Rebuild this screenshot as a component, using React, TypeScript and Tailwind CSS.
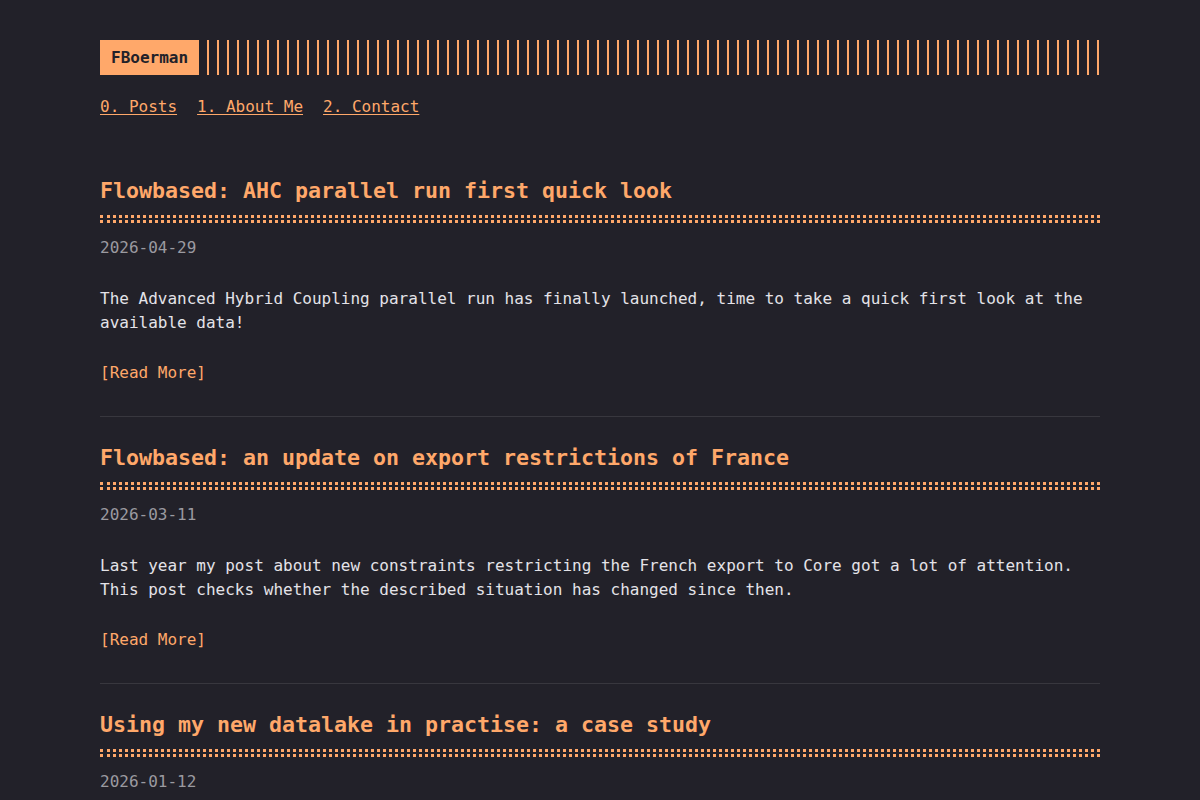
import React from 'react'

const posts = [
    {
        title: 'Flowbased: AHC parallel run first quick look',
        date: '2026-04-29',
        summary:
            'The Advanced Hybrid Coupling parallel run has finally launched, time to take a quick first look at the available data!',
    },
    {
        title: 'Flowbased: an update on export restrictions of France',
        date: '2026-03-11',
        summary:
            'Last year my post about new constraints restricting the French export to Core got a lot of attention. This post checks whether the described situation has changed since then.',
    },
    {
        title: 'Using my new datalake in practise: a case study',
        date: '2026-01-12',
        summary:
            'A look at how the datalake I built last year holds up when answering a real question about the market.',
    },
]

const mono = { fontFamily: '"DejaVu Sans Mono", "Liberation Mono", monospace' }

function Header() {
    return (
        <header>
            <div className="flex items-stretch">
                <a className="bg-[#ffa86a] text-[#222129] font-bold text-[16px] pl-[11px] pr-[11px] py-[5px] leading-[25px] no-underline">
                    FBoerman
                </a>
                {/* bar pattern */}
                <div className="flex-1 ml-[8px] bg-[repeating-linear-gradient(90deg,#ffa86a_0px,#ffa86a_2px,transparent_2px,transparent_10px)]" />
            </div>
            <nav className="mt-[20px] flex gap-[20px] text-[16px] leading-[24px]">
                <a className="text-[#ffa86a] underline underline-offset-2">0. Posts</a>
                <a className="text-[#ffa86a] underline underline-offset-2">1. About Me</a>
                <a className="text-[#ffa86a] underline underline-offset-2">2. Contact</a>
            </nav>
        </header>
    )
}

function Post({ title, date, summary }: { title: string; date: string; summary: string }) {
    return (
        <article className="border-b border-white/10 pt-[27px] pb-[31px]">
            <h2 className="text-[#ffa86a] font-bold text-[21.6px] leading-[28px]">{title}</h2>
            {/* double dotted rule */}
            <div className="mt-[10px] h-[8px] border-y-[3px] border-dotted border-[#ffa86a]" />
            <div className="mt-[13px] text-[#9b9aa0] text-[16px] leading-[24px]">{date}</div>
            <p className="mt-[27px] text-[#e4e3e8] text-[16px] leading-[24px]">{summary}</p>
            <div className="mt-[26px] text-[#ffa86a] text-[16px] leading-[24px]">[Read More]</div>
        </article>
    )
}

export default function App() {
    return (
        <div className="min-h-screen bg-[#222129]" style={mono}>
            <div className="w-[1000px] mx-auto pt-[40px]">
                <Header />
                <main className="mt-[31px]">
                    {posts.map(p => (
                        <Post key={p.date} {...p} />
                    ))}
                </main>
            </div>
        </div>
    )
}
